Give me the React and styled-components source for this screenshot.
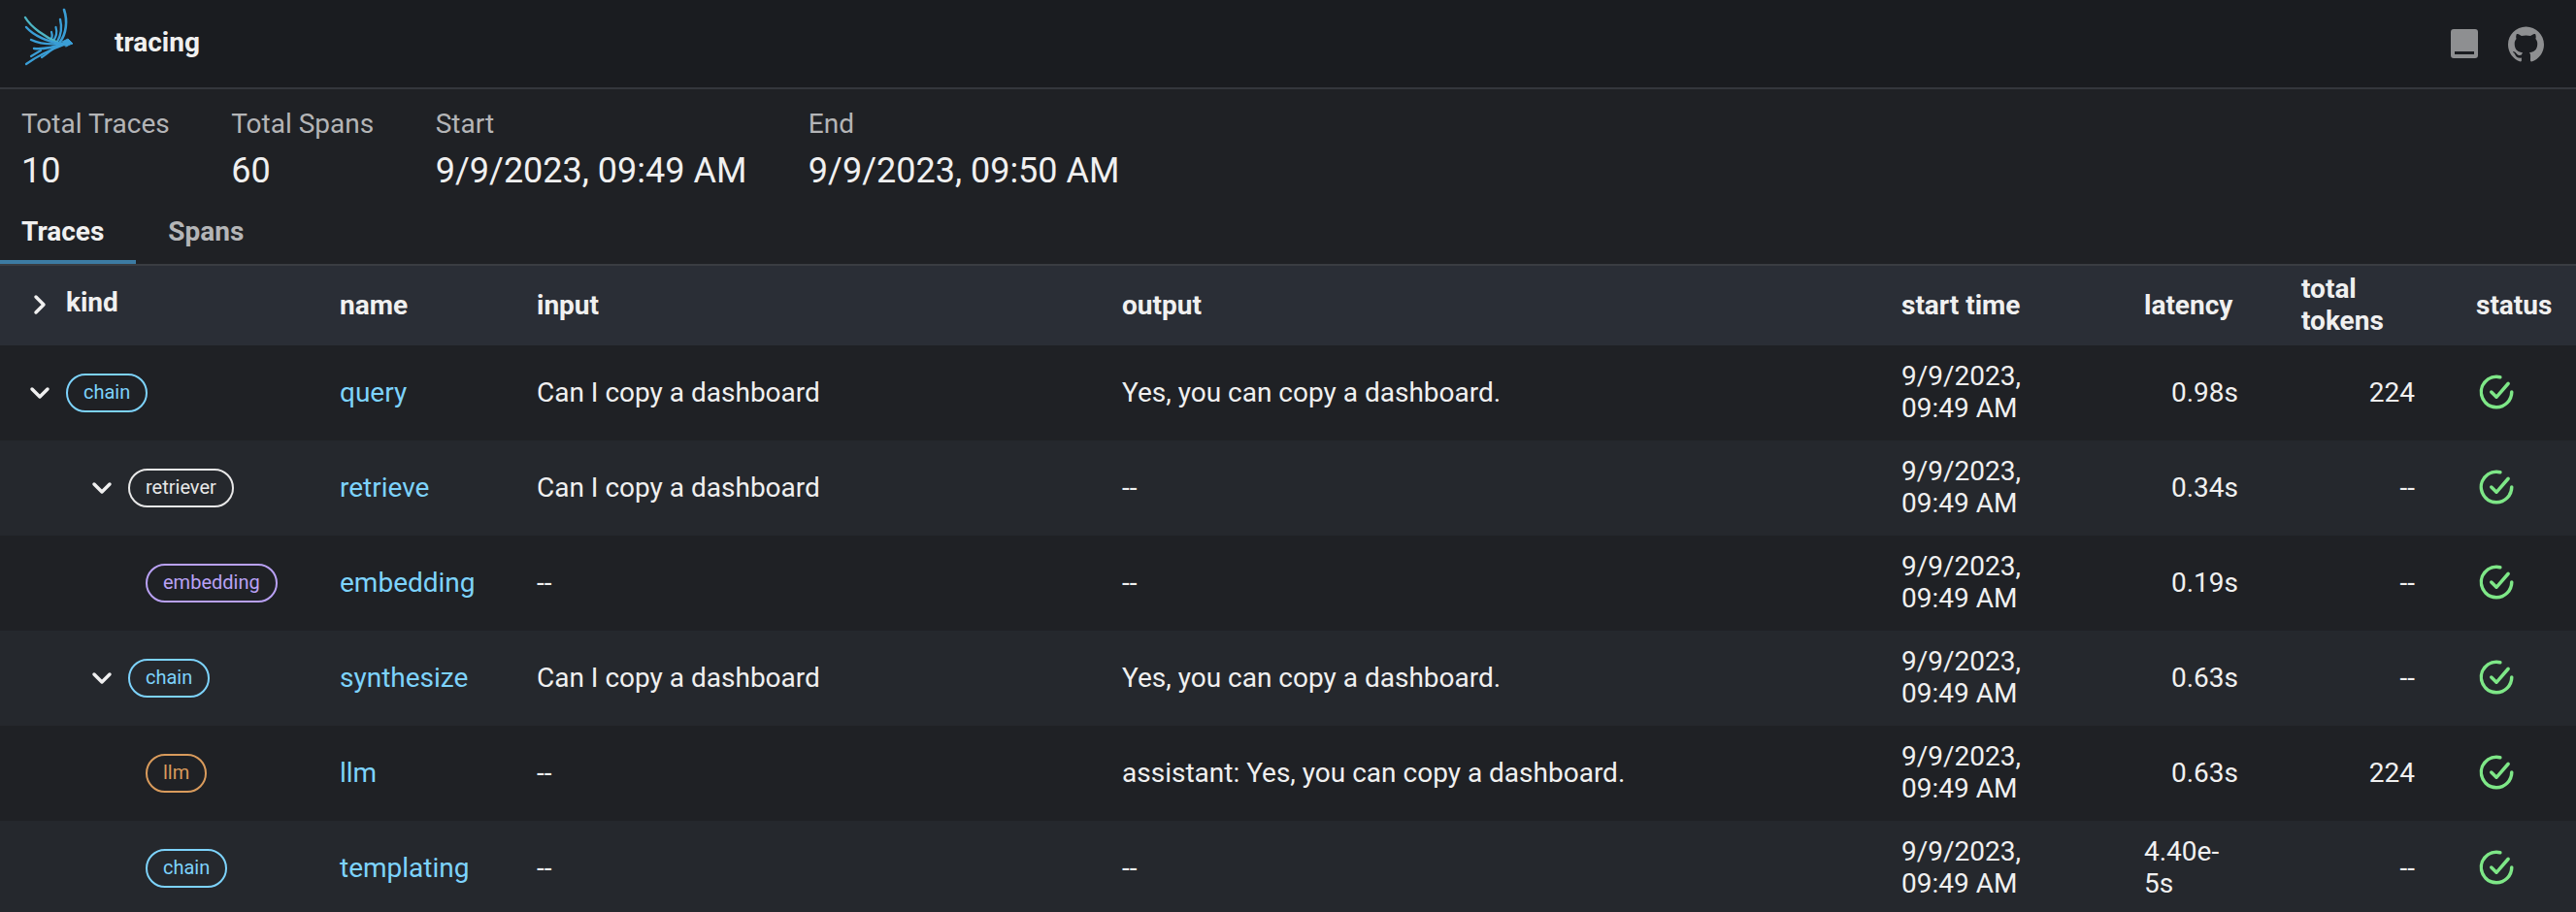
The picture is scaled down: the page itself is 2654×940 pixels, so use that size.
import React from 'react'
import styled, { createGlobalStyle } from 'styled-components'
import { ChevronDown, ChevronRight } from 'lucide-react'

const GlobalStyle = createGlobalStyle`
  html, body {
    margin: 0;
    padding: 0;
    background: #1f2125;
    font-family: Roboto, "Liberation Sans", sans-serif;
    color: #f0f0f0;
    -webkit-font-smoothing: antialiased;
  }
`

const Page = styled.div`
  height: 100vh;
  overflow: hidden;
  background: #1f2125;
`

const NavBar = styled.header`
  height: 90px;
  display: flex;
  align-items: center;
  justify-content: space-between;
  background: #1a1c20;
  border-bottom: 2px solid #34373c;
`

const Brand = styled.div`
  display: flex;
  align-items: center;
  padding-left: 22px;
`

const Logo = styled.svg`
  display: block;
  width: 60px;
  height: 60px;
  margin-bottom: 14px;
`

const Title = styled.span`
  margin-left: 36px;
  margin-bottom: 4px;
  font-size: 28px;
  font-weight: 700;
  color: #f0f0f0;
`

const NavLinks = styled.div`
  display: flex;
  align-items: center;
  gap: 31px;
  padding-right: 33px;
  color: #8e8f91;
`

const StatsBar = styled.section`
  display: flex;
  gap: 63.5px;
  padding: 16px 22px 0;
  height: 130px;
  box-sizing: border-box;
`

const Stat = styled.div`
  display: flex;
  flex-direction: column;
`

const StatLabel = styled.span`
  font-size: 28px;
  line-height: 40px;
  color: #b4b5b7;
`

const StatValue = styled.span`
  font-size: 36px;
  line-height: 48px;
  margin-top: 4px;
  color: #f0f0f0;
`

const TabList = styled.nav`
  display: flex;
  height: 52px;
  box-sizing: border-box;
  border-bottom: 2px solid #3a3d42;
`

const Tab = styled.div`
  height: 50px;
  box-sizing: border-box;
  padding-right: ${(p) => (p.$active ? '33px' : '0')};
  padding-left: ${(p) => (p.$active ? '22px' : '33px')};
  font-size: 28px;
  font-weight: 700;
  line-height: 34px;
  color: ${(p) => (p.$active ? '#f0f0f0' : '#b4b5b7')};
  border-bottom: 4px solid ${(p) => (p.$active ? '#3c7ba3' : 'transparent')};
`

const Table = styled.table`
  width: 100%;
  table-layout: fixed;
  border-collapse: collapse;
  font-size: 28px;
  line-height: 33px;
`

const HeadRow = styled.tr`
  height: 82px;
  background: #2a2e36;
`

const Th = styled.th`
  padding: 0 40px 2px 20px;
  text-align: left;
  font-weight: 700;
  color: #f0f0f0;
  vertical-align: middle;
`

const KindHead = styled.div`
  display: flex;
  align-items: center;
  padding-left: 25px;
  margin-left: -20px;
`

const KindLabel = styled.span`
  margin-left: 11px;
  position: relative;
  top: -3px;
`

const Row = styled.tr`
  height: 98px;
  background: ${(p) => (p.$even ? '#25282d' : '#1f2125')};
`

const Td = styled.td`
  padding: 0 40px 2px 20px;
  vertical-align: middle;
  color: #f0f0f0;
`

const NameLink = styled.a`
  color: #7dd3fc;
`

const NumberBox = styled.div`
  display: flex;
  justify-content: flex-end;
  padding-right: ${(p) => p.$inset}px;
`

const KindCell = styled.div`
  display: flex;
  align-items: center;
  margin-top: 2px;
  margin-left: -20px;
  padding-left: ${(p) => (p.$leaf ? 22 + p.$depth * 64 : 25 + p.$depth * 64)}px;
`

const Toggle = styled.span`
  display: flex;
  margin-left: -4px;
  margin-right: 7px;
  width: 40px;
  justify-content: center;
  color: #f0f0f0;
`

const Pill = styled.span`
  display: inline-block;
  box-sizing: border-box;
  height: 40px;
  padding: 0 16px;
  border: 2px solid ${(p) => p.$color};
  border-radius: 20px;
  color: ${(p) => p.$color};
  font-size: 20px;
  line-height: 35px;
  white-space: nowrap;
`

const StatusIcon = styled.svg`
  display: block;
  width: 42px;
  height: 42px;
  fill: #7ee787;
`

const kindColors = {
  chain: '#7dd3fc',
  retriever: '#e8e8e8',
  embedding: '#b9a1f5',
  llm: '#d99b5c',
}

const rows = [
  { kind: 'chain', depth: 0, open: true, name: 'query', input: 'Can I copy a dashboard', output: 'Yes, you can copy a dashboard.', latency: '0.98s', tokens: '224' },
  { kind: 'retriever', depth: 1, open: true, name: 'retrieve', input: 'Can I copy a dashboard', output: '--', latency: '0.34s', tokens: '--' },
  { kind: 'embedding', depth: 2, name: 'embedding', input: '--', output: '--', latency: '0.19s', tokens: '--' },
  { kind: 'chain', depth: 1, open: true, name: 'synthesize', input: 'Can I copy a dashboard', output: 'Yes, you can copy a dashboard.', latency: '0.63s', tokens: '--' },
  { kind: 'llm', depth: 2, name: 'llm', input: '--', output: 'assistant: Yes, you can copy a dashboard.', latency: '0.63s', tokens: '224' },
  { kind: 'chain', depth: 2, name: 'templating', input: '--', output: '--', latency: '4.40e-5s', tokens: '--' },
]

const PhoenixLogo = () => (
  <Logo viewBox="0 0 60 60" fill="none" stroke="#3a9ed6" strokeLinecap="round" strokeWidth="2.2">
    <path d="M40 35 C46 27 48 14 44 2" strokeWidth="2.6" />
    <path d="M37 35 C41 28 42 20 40 12" strokeWidth="2.4" />
    <path d="M33 34 C36 30 37 25 35.5 20" />
    <path d="M30 33 C32 31 32 28 31 25" />
    <path d="M4 10 C10 20 24 30 38 36" stroke="#4db5c4" strokeWidth="2.4" />
    <path d="M5 20 C14 30 26 34 40 37" strokeWidth="2.4" />
    <path d="M10 33 C20 38 30 38 42 37" strokeWidth="2.4" />
    <path d="M13 42 C22 43 32 41 44 37" strokeWidth="2.4" />
    <path d="M5 58 C16 50 28 44 44 38" />
    <path d="M10 50 L20 44" />
    <path d="M21 51 C26 48 29 45 33 42" />
    <path d="M42 35 L48 32 L53 37 L50 38 L46 40 Z" fill="#3a9ed6" strokeWidth="1" />
  </Logo>
)

const BookIcon = () => (
  <svg width="28" height="30" viewBox="0 0 28 30">
    <path
      fill="currentColor"
      fillRule="evenodd"
      d="M3 0h22a3 3 0 0 1 3 3v24a3 3 0 0 1-3 3H3a3 3 0 0 1-3-3V3a3 3 0 0 1 3-3zM4 23v3h20v-3z"
    />
  </svg>
)

const GithubIcon = () => (
  <svg width="37" height="37" viewBox="0 0 24 24" fill="currentColor">
    <path d="M12 .297c-6.63 0-12 5.373-12 12 0 5.303 3.438 9.8 8.205 11.385.6.113.82-.258.82-.577 0-.285-.01-1.04-.015-2.04-3.338.724-4.042-1.61-4.042-1.61C4.422 18.07 3.633 17.7 3.633 17.7c-1.087-.744.084-.729.084-.729 1.205.084 1.838 1.236 1.838 1.236 1.07 1.835 2.809 1.305 3.495.998.108-.776.417-1.305.76-1.605-2.665-.3-5.466-1.332-5.466-5.93 0-1.31.465-2.38 1.235-3.22-.135-.303-.54-1.523.105-3.176 0 0 1.005-.322 3.3 1.23.96-.267 1.98-.399 3-.405 1.02.006 2.04.138 3 .405 2.28-1.552 3.285-1.23 3.285-1.23.645 1.653.24 2.873.12 3.176.765.84 1.23 1.91 1.23 3.22 0 4.61-2.805 5.625-5.475 5.92.42.36.81 1.096.81 2.22 0 1.606-.015 2.896-.015 3.286 0 .315.21.69.825.57C20.565 22.092 24 17.592 24 12.297c0-6.627-5.373-12-12-12" />
  </svg>
)

const CheckCircle = () => (
  <StatusIcon viewBox="0 0 24 24">
    <path d="M9.71 11.29a1 1 0 0 0-1.42 1.42l3 3A1 1 0 0 0 12 16a1 1 0 0 0 .72-.34l7-8a1 1 0 0 0-1.5-1.32L12 13.54z" />
    <path d="M21 11a1 1 0 0 0-1 1 8 8 0 0 1-8 8A8 8 0 0 1 6.33 6.36 7.93 7.93 0 0 1 12 4a8.79 8.79 0 0 1 1.9.22 1 1 0 1 0 .47-1.94A10.54 10.54 0 0 0 12 2a10 10 0 0 0-7 17.09A9.93 9.93 0 0 0 12 22a10 10 0 0 0 10-10 1 1 0 0 0-1-1z" />
  </StatusIcon>
)

export default function App() {
  return (
    <Page>
      <GlobalStyle />
      <NavBar>
        <Brand>
          <PhoenixLogo />
          <Title>tracing</Title>
        </Brand>
        <NavLinks>
          <BookIcon />
          <GithubIcon />
        </NavLinks>
      </NavBar>
      <StatsBar>
        <Stat>
          <StatLabel>Total Traces</StatLabel>
          <StatValue>10</StatValue>
        </Stat>
        <Stat>
          <StatLabel>Total Spans</StatLabel>
          <StatValue>60</StatValue>
        </Stat>
        <Stat>
          <StatLabel>Start</StatLabel>
          <StatValue>9/9/2023, 09:49 AM</StatValue>
        </Stat>
        <Stat>
          <StatLabel>End</StatLabel>
          <StatValue>9/9/2023, 09:50 AM</StatValue>
        </Stat>
      </StatsBar>
      <TabList>
        <Tab $active>Traces</Tab>
        <Tab>Spans</Tab>
      </TabList>
      <Table>
        <colgroup>
          <col style={{ width: 330 }} />
          <col style={{ width: 203 }} />
          <col style={{ width: 603 }} />
          <col style={{ width: 803 }} />
          <col style={{ width: 250 }} />
          <col style={{ width: 162 }} />
          <col style={{ width: 180 }} />
          <col />
        </colgroup>
        <thead>
          <HeadRow>
            <Th>
              <KindHead>
                <ChevronRight size={32} strokeWidth={2.6} />
                <KindLabel>kind</KindLabel>
              </KindHead>
            </Th>
            <Th>name</Th>
            <Th>input</Th>
            <Th>output</Th>
            <Th>start time</Th>
            <Th>latency</Th>
            <Th>total tokens</Th>
            <Th>status</Th>
          </HeadRow>
        </thead>
        <tbody>
          {rows.map((row, i) => (
            <Row key={row.name} $even={i % 2 === 1}>
              <Td>
                <KindCell $depth={row.depth} $leaf={!row.open}>
                  {row.open && (
                    <Toggle>
                      <ChevronDown size={32} strokeWidth={2.6} />
                    </Toggle>
                  )}
                  <Pill $color={kindColors[row.kind]}>{row.kind}</Pill>
                </KindCell>
              </Td>
              <Td>
                <NameLink>{row.name}</NameLink>
              </Td>
              <Td>{row.input}</Td>
              <Td>{row.output}</Td>
              <Td>9/9/2023, 09:49 AM</Td>
              <Td>
                <NumberBox $inset={5}>{row.latency}</NumberBox>
              </Td>
              <Td>
                <NumberBox $inset={3}>{row.tokens}</NumberBox>
              </Td>
              <Td>
                <CheckCircle />
              </Td>
            </Row>
          ))}
        </tbody>
      </Table>
    </Page>
  )
}
